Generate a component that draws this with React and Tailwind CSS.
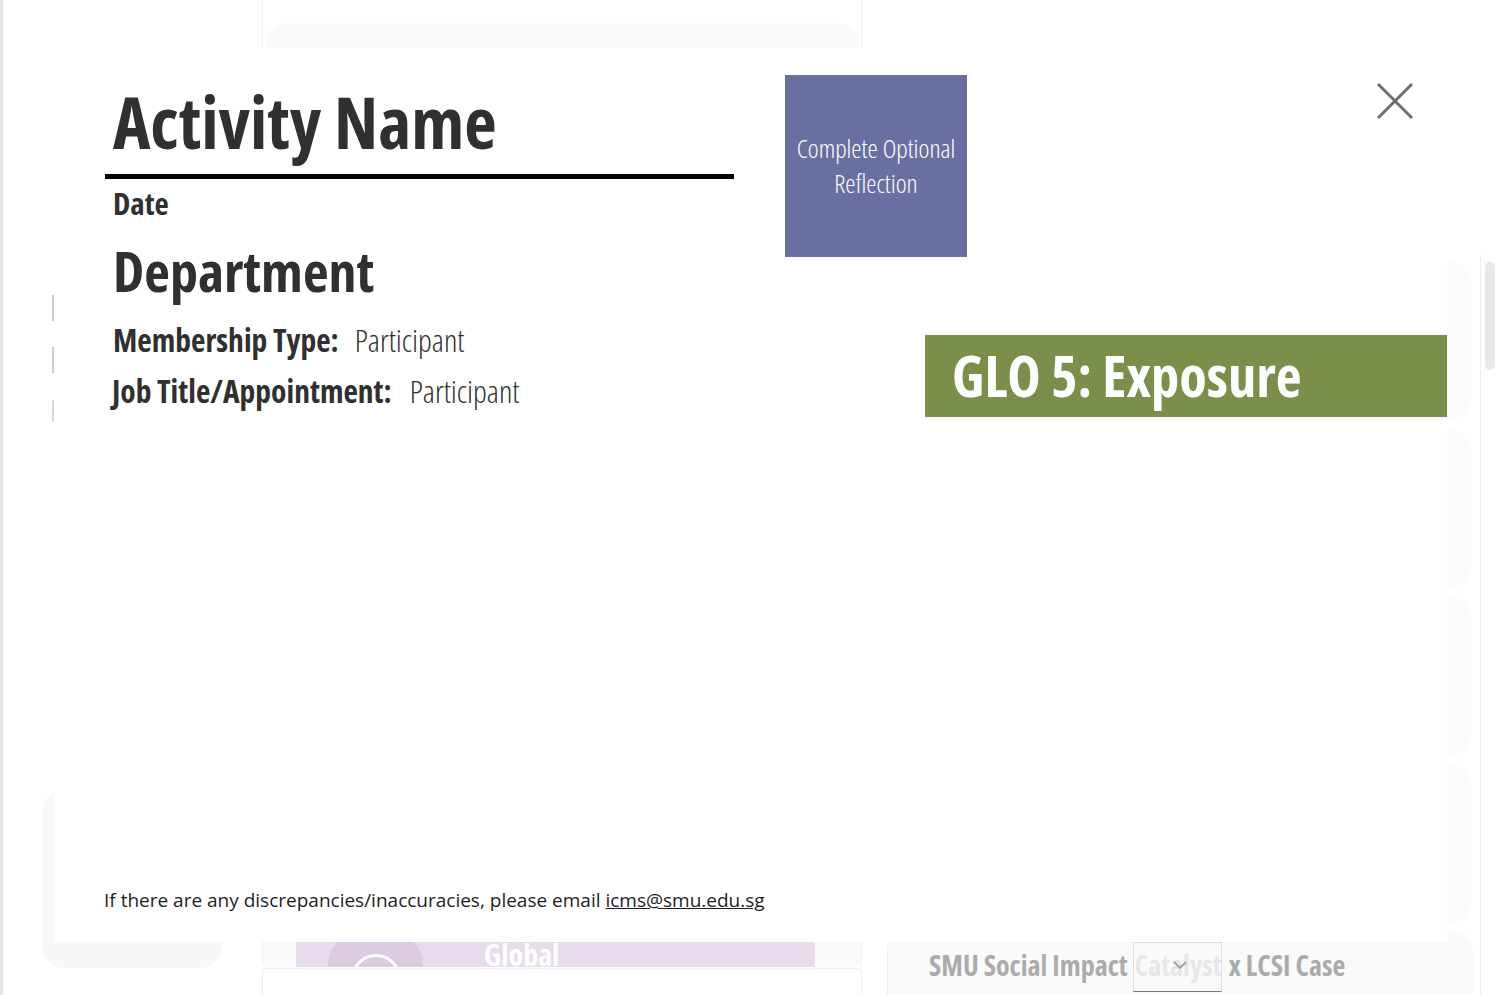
import React from 'react';

const condensed = { fontFamily: '"Open Sans", "Noto Sans", sans-serif', fontStretch: '75%' };

// Faded page that sits behind the modal
function Backdrop() {
  return (
    <div className="absolute inset-0 overflow-hidden bg-white">
      <div className="absolute left-0 top-0 h-full w-[3px] bg-[#e6e6e6]" />

      {/* center column */}
      <div className="absolute left-[262px] top-0 w-[600px] h-[60px] border-x border-[#f0f0f0]">
        <div className="mt-[23px] mx-[2px] h-[40px] rounded-t-[22px] bg-[#fafafa]" />
      </div>
      <div className="absolute left-[262px] top-[930px] w-[600px] h-[37px] border-x border-[#f0f0f0] bg-[#fafafa] rounded-b-[4px]">
        <div className="relative ml-[33px] mr-[46px] h-full bg-[#e8dcec] overflow-hidden">
          <div className="absolute left-[32px] top-[4px] w-[95px] h-[80px] rounded-[30px] bg-[#dccbe0]" />
          <div className="absolute left-[55px] top-[24px] w-[50px] h-[50px] rounded-full border-[3px] border-white" />
          <span className="absolute left-[188px] top-[10px] text-[30px] leading-none font-bold text-white" style={condensed}>Global</span>
        </div>
      </div>
      <div className="absolute left-[262px] top-[968px] w-[600px] h-[40px] border border-[#eeeeee] rounded-[4px] bg-white" />

      {/* left column leftovers */}
      <div className="absolute left-[52px] top-[295px] w-[2px] h-[26px] bg-[#cfcfcf]" />
      <div className="absolute left-[52px] top-[347px] w-[2px] h-[26px] bg-[#cfcfcf]" />
      <div className="absolute left-[52px] top-[400px] w-[2px] h-[22px] bg-[#d8d8d8] rounded-full" />
      <div className="absolute left-[42px] top-[790px] w-[180px] h-[178px] rounded-[22px] bg-[#f8f8f8]" />

      {/* right column cards */}
      {[262, 430, 597, 765].map(t => (
        <div key={t} className="absolute left-[1400px] w-[72px] h-[158px] rounded-r-[24px] bg-[#fbfbfb]" style={{ top: t }} />
      ))}
      <div className="absolute left-[887px] top-[932px] w-[586px] h-[70px] rounded-t-[18px] bg-[#fafafa] border-l border-[#eeeeee]">
        <div className="flex items-center h-full pl-[41px] pb-[4px] text-[28px] font-bold text-[#ababab] whitespace-nowrap" style={condensed}>
          <span>SMU Social Impact</span>
          <span className="relative mx-[7px] text-[#e6e6e6]">
            Catalyst
            <span className="absolute left-[-2px] top-[-2px] w-[89px] h-[50px] border border-[#dddddd] border-b-[#777777]" />
            <svg viewBox="0 0 14 9" className="absolute left-[38px] top-[17px] w-[14px] h-[9px]">
              <path d="M1 1 L7 7 L13 1" fill="none" stroke="#a0a0a0" strokeWidth="1.8" />
            </svg>
          </span>
          <span>x LCSI Case</span>
        </div>
      </div>

      {/* scrollbar */}
      <div className="absolute left-[1480px] top-[255px] w-px h-[740px] bg-[#f0f0f0]" />
      <div className="absolute left-[1485px] top-[262px] w-[10px] h-[108px] rounded-full bg-[#e8e8e8]" />
    </div>
  );
}

export default function App() {
  return (
    <div className="relative w-[1498px] h-[995px] overflow-hidden bg-white">
      <Backdrop />

      <div className="absolute left-[55px] top-[48px] w-[1392px] h-[894px] bg-white flex flex-col" style={condensed}>
        <div className="flex items-start pt-[27px] pl-[50px]">
          {/* left: details */}
          <div className="w-[629px] flex flex-col text-[#303030]">
            <h1 className="mt-[11px] pl-[8px] text-[71px] leading-none font-bold">Activity Name</h1>
            <div className="mt-[17px] h-[5px] bg-black" />
            <div className="mt-[9px] pl-[8px] text-[31px] leading-none font-bold">Date</div>
            <div className="mt-[23px] pl-[8px] text-[56px] leading-none font-bold">Department</div>
            <div className="mt-[26px] pl-[8px] flex items-baseline gap-[16px] text-[31.5px] leading-none">
              <span className="font-bold">Membership Type:</span>
              <span className="font-light">Participant</span>
            </div>
            <div className="mt-[19px] pl-[7px] flex items-baseline gap-[18px] text-[31.5px] leading-none">
              <span className="font-bold">Job Title/Appointment:</span>
              <span className="font-light">Participant</span>
            </div>
          </div>

          {/* right: actions + GLO */}
          <div className="flex-1 flex flex-col">
            <div className="flex items-start">
              <button className="ml-[51px] w-[182px] h-[182px] bg-[#6970a1] text-white text-[26px] leading-[35px] font-light flex items-center justify-center text-center px-2">
                Complete Optional Reflection
              </button>
              <button className="ml-auto mr-[33px] mt-[7px] w-[38px] h-[38px]" aria-label="Close">
                <svg viewBox="0 0 38 38" className="w-full h-full">
                  <path d="M2 2 L36 36 M36 2 L2 36" stroke="#6e6e6e" strokeWidth="3" />
                </svg>
              </button>
            </div>
            <div className="self-end mt-[78px] w-[522px] h-[82px] bg-[#7b8f4a] flex items-center pl-[27px] text-white text-[56.5px] font-bold leading-none">
              GLO 5: Exposure
            </div>
          </div>
        </div>

        <p className="mt-auto mb-[28px] pl-[49px] text-[19px] leading-[28px] text-[#1e1e1e]" style={{ fontFamily: '"Open Sans", sans-serif', fontStretch: '95%' }}>
          If there are any discrepancies/inaccuracies, please email <a href="#" className="underline">icms@smu.edu.sg</a>
        </p>
      </div>
    </div>
  );
}
